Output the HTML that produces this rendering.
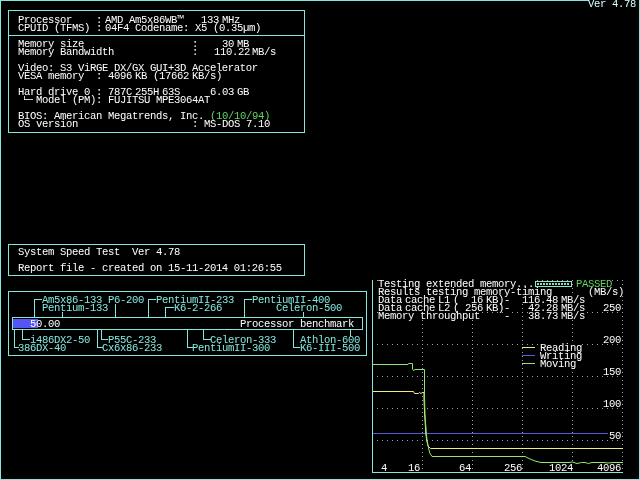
<!DOCTYPE html>
<html lang="en">
<head>
<meta charset="utf-8">
<title>System Speed Test 4.78</title>
<style>
html,body{margin:0;padding:0;background:#000;}
body{width:640px;height:480px;overflow:hidden;position:relative;}
svg{position:absolute;left:0;top:0;display:block;will-change:transform;}
text{font-family:"Liberation Mono","DejaVu Sans Mono",monospace;font-size:10.6px;letter-spacing:-0.3610px;white-space:pre;}
</style>
</head>
<body>
<svg width="640" height="480" viewBox="0 0 640 480">
<rect width="640" height="480" fill="#000"/>
<rect x="0" y="0" width="589" height="1" fill="#84e6dc"/>
<rect x="0" y="0" width="1" height="480" fill="#84e6dc"/>
<rect x="0" y="479" width="640" height="1" fill="#84e6dc"/>
<rect x="639" y="0" width="1" height="480" fill="#84e6dc"/>
<rect x="8" y="10" width="297" height="1" fill="#84e6dc"/>
<rect x="8" y="132" width="297" height="1" fill="#84e6dc"/>
<rect x="8" y="10" width="1" height="123" fill="#84e6dc"/>
<rect x="304" y="10" width="1" height="123" fill="#84e6dc"/>
<rect x="8" y="35" width="297" height="1" fill="#84e6dc"/>
<rect x="8" y="244" width="297" height="1" fill="#84e6dc"/>
<rect x="8" y="275" width="297" height="1" fill="#84e6dc"/>
<rect x="8" y="244" width="1" height="32" fill="#84e6dc"/>
<rect x="304" y="244" width="1" height="32" fill="#84e6dc"/>
<rect x="8" y="291" width="359" height="1" fill="#84e6dc"/>
<rect x="8" y="355" width="359" height="1" fill="#84e6dc"/>
<rect x="8" y="291" width="1" height="65" fill="#84e6dc"/>
<rect x="366" y="291" width="1" height="65" fill="#84e6dc"/>
<rect x="13" y="319" width="25" height="9" fill="#5555f5"/>
<rect x="12" y="317" width="351" height="1" fill="#84e6dc"/>
<rect x="12" y="329" width="351" height="1" fill="#84e6dc"/>
<rect x="12" y="317" width="1" height="13" fill="#84e6dc"/>
<rect x="362" y="317" width="1" height="13" fill="#84e6dc"/>
<rect x="34" y="299" width="1" height="18" fill="#84e6dc"/>
<rect x="34" y="299" width="8" height="1" fill="#84e6dc"/>
<rect x="62" y="312" width="1" height="5" fill="#84e6dc"/>
<rect x="115" y="304" width="1" height="13" fill="#84e6dc"/>
<rect x="148" y="299" width="1" height="18" fill="#84e6dc"/>
<rect x="148" y="299" width="8" height="1" fill="#84e6dc"/>
<rect x="165" y="307" width="1" height="10" fill="#84e6dc"/>
<rect x="165" y="307" width="9" height="1" fill="#84e6dc"/>
<rect x="244" y="299" width="1" height="18" fill="#84e6dc"/>
<rect x="244" y="299" width="8" height="1" fill="#84e6dc"/>
<rect x="303" y="312" width="1" height="5" fill="#84e6dc"/>
<rect x="14" y="330" width="1" height="18" fill="#84e6dc"/>
<rect x="14" y="347" width="5" height="1" fill="#84e6dc"/>
<rect x="22" y="330" width="1" height="10" fill="#84e6dc"/>
<rect x="22" y="339" width="8" height="1" fill="#84e6dc"/>
<rect x="97" y="330" width="1" height="18" fill="#84e6dc"/>
<rect x="97" y="347" width="6" height="1" fill="#84e6dc"/>
<rect x="101" y="330" width="1" height="10" fill="#84e6dc"/>
<rect x="101" y="339" width="7" height="1" fill="#84e6dc"/>
<rect x="187" y="330" width="1" height="18" fill="#84e6dc"/>
<rect x="187" y="347" width="6" height="1" fill="#84e6dc"/>
<rect x="203" y="330" width="1" height="10" fill="#84e6dc"/>
<rect x="203" y="339" width="8" height="1" fill="#84e6dc"/>
<rect x="293" y="330" width="1" height="18" fill="#84e6dc"/>
<rect x="293" y="347" width="7" height="1" fill="#84e6dc"/>
<rect x="350" y="330" width="1" height="6" fill="#84e6dc"/>
<path d="M377 280h1v1h-1zM382 280h1v1h-1zM387 280h1v1h-1zM392 280h1v1h-1zM397 280h1v1h-1zM402 280h1v1h-1zM407 280h1v1h-1zM412 280h1v1h-1zM417 280h1v1h-1zM422 280h1v1h-1zM427 280h1v1h-1zM432 280h1v1h-1zM437 280h1v1h-1zM442 280h1v1h-1zM447 280h1v1h-1zM452 280h1v1h-1zM457 280h1v1h-1zM462 280h1v1h-1zM467 280h1v1h-1zM472 280h1v1h-1zM477 280h1v1h-1zM482 280h1v1h-1zM487 280h1v1h-1zM492 280h1v1h-1zM497 280h1v1h-1zM502 280h1v1h-1zM507 280h1v1h-1zM512 280h1v1h-1zM517 280h1v1h-1zM522 280h1v1h-1zM527 280h1v1h-1zM532 280h1v1h-1zM537 280h1v1h-1zM542 280h1v1h-1zM547 280h1v1h-1zM552 280h1v1h-1zM557 280h1v1h-1zM562 280h1v1h-1zM567 280h1v1h-1zM572 280h1v1h-1zM577 280h1v1h-1zM582 280h1v1h-1zM587 280h1v1h-1zM592 280h1v1h-1zM597 280h1v1h-1zM602 280h1v1h-1zM607 280h1v1h-1zM612 280h1v1h-1zM617 280h1v1h-1zM622 280h1v1h-1zM377 312h1v1h-1zM382 312h1v1h-1zM387 312h1v1h-1zM392 312h1v1h-1zM397 312h1v1h-1zM402 312h1v1h-1zM407 312h1v1h-1zM412 312h1v1h-1zM417 312h1v1h-1zM422 312h1v1h-1zM427 312h1v1h-1zM432 312h1v1h-1zM437 312h1v1h-1zM442 312h1v1h-1zM447 312h1v1h-1zM452 312h1v1h-1zM457 312h1v1h-1zM462 312h1v1h-1zM467 312h1v1h-1zM472 312h1v1h-1zM477 312h1v1h-1zM482 312h1v1h-1zM487 312h1v1h-1zM492 312h1v1h-1zM497 312h1v1h-1zM502 312h1v1h-1zM507 312h1v1h-1zM512 312h1v1h-1zM517 312h1v1h-1zM522 312h1v1h-1zM527 312h1v1h-1zM532 312h1v1h-1zM537 312h1v1h-1zM542 312h1v1h-1zM547 312h1v1h-1zM552 312h1v1h-1zM557 312h1v1h-1zM562 312h1v1h-1zM567 312h1v1h-1zM572 312h1v1h-1zM577 312h1v1h-1zM582 312h1v1h-1zM587 312h1v1h-1zM592 312h1v1h-1zM597 312h1v1h-1zM602 312h1v1h-1zM607 312h1v1h-1zM612 312h1v1h-1zM617 312h1v1h-1zM622 312h1v1h-1zM377 344h1v1h-1zM382 344h1v1h-1zM387 344h1v1h-1zM392 344h1v1h-1zM397 344h1v1h-1zM402 344h1v1h-1zM407 344h1v1h-1zM412 344h1v1h-1zM417 344h1v1h-1zM422 344h1v1h-1zM427 344h1v1h-1zM432 344h1v1h-1zM437 344h1v1h-1zM442 344h1v1h-1zM447 344h1v1h-1zM452 344h1v1h-1zM457 344h1v1h-1zM462 344h1v1h-1zM467 344h1v1h-1zM472 344h1v1h-1zM477 344h1v1h-1zM482 344h1v1h-1zM487 344h1v1h-1zM492 344h1v1h-1zM497 344h1v1h-1zM502 344h1v1h-1zM507 344h1v1h-1zM512 344h1v1h-1zM517 344h1v1h-1zM522 344h1v1h-1zM527 344h1v1h-1zM532 344h1v1h-1zM537 344h1v1h-1zM542 344h1v1h-1zM547 344h1v1h-1zM552 344h1v1h-1zM557 344h1v1h-1zM562 344h1v1h-1zM567 344h1v1h-1zM572 344h1v1h-1zM577 344h1v1h-1zM582 344h1v1h-1zM587 344h1v1h-1zM592 344h1v1h-1zM597 344h1v1h-1zM602 344h1v1h-1zM607 344h1v1h-1zM612 344h1v1h-1zM617 344h1v1h-1zM622 344h1v1h-1zM377 376h1v1h-1zM382 376h1v1h-1zM387 376h1v1h-1zM392 376h1v1h-1zM397 376h1v1h-1zM402 376h1v1h-1zM407 376h1v1h-1zM412 376h1v1h-1zM417 376h1v1h-1zM422 376h1v1h-1zM427 376h1v1h-1zM432 376h1v1h-1zM437 376h1v1h-1zM442 376h1v1h-1zM447 376h1v1h-1zM452 376h1v1h-1zM457 376h1v1h-1zM462 376h1v1h-1zM467 376h1v1h-1zM472 376h1v1h-1zM477 376h1v1h-1zM482 376h1v1h-1zM487 376h1v1h-1zM492 376h1v1h-1zM497 376h1v1h-1zM502 376h1v1h-1zM507 376h1v1h-1zM512 376h1v1h-1zM517 376h1v1h-1zM522 376h1v1h-1zM527 376h1v1h-1zM532 376h1v1h-1zM537 376h1v1h-1zM542 376h1v1h-1zM547 376h1v1h-1zM552 376h1v1h-1zM557 376h1v1h-1zM562 376h1v1h-1zM567 376h1v1h-1zM572 376h1v1h-1zM577 376h1v1h-1zM582 376h1v1h-1zM587 376h1v1h-1zM592 376h1v1h-1zM597 376h1v1h-1zM602 376h1v1h-1zM607 376h1v1h-1zM612 376h1v1h-1zM617 376h1v1h-1zM622 376h1v1h-1zM377 408h1v1h-1zM382 408h1v1h-1zM387 408h1v1h-1zM392 408h1v1h-1zM397 408h1v1h-1zM402 408h1v1h-1zM407 408h1v1h-1zM412 408h1v1h-1zM417 408h1v1h-1zM422 408h1v1h-1zM427 408h1v1h-1zM432 408h1v1h-1zM437 408h1v1h-1zM442 408h1v1h-1zM447 408h1v1h-1zM452 408h1v1h-1zM457 408h1v1h-1zM462 408h1v1h-1zM467 408h1v1h-1zM472 408h1v1h-1zM477 408h1v1h-1zM482 408h1v1h-1zM487 408h1v1h-1zM492 408h1v1h-1zM497 408h1v1h-1zM502 408h1v1h-1zM507 408h1v1h-1zM512 408h1v1h-1zM517 408h1v1h-1zM522 408h1v1h-1zM527 408h1v1h-1zM532 408h1v1h-1zM537 408h1v1h-1zM542 408h1v1h-1zM547 408h1v1h-1zM552 408h1v1h-1zM557 408h1v1h-1zM562 408h1v1h-1zM567 408h1v1h-1zM572 408h1v1h-1zM577 408h1v1h-1zM582 408h1v1h-1zM587 408h1v1h-1zM592 408h1v1h-1zM597 408h1v1h-1zM602 408h1v1h-1zM607 408h1v1h-1zM612 408h1v1h-1zM617 408h1v1h-1zM622 408h1v1h-1zM377 440h1v1h-1zM382 440h1v1h-1zM387 440h1v1h-1zM392 440h1v1h-1zM397 440h1v1h-1zM402 440h1v1h-1zM407 440h1v1h-1zM412 440h1v1h-1zM417 440h1v1h-1zM422 440h1v1h-1zM427 440h1v1h-1zM432 440h1v1h-1zM437 440h1v1h-1zM442 440h1v1h-1zM447 440h1v1h-1zM452 440h1v1h-1zM457 440h1v1h-1zM462 440h1v1h-1zM467 440h1v1h-1zM472 440h1v1h-1zM477 440h1v1h-1zM482 440h1v1h-1zM487 440h1v1h-1zM492 440h1v1h-1zM497 440h1v1h-1zM502 440h1v1h-1zM507 440h1v1h-1zM512 440h1v1h-1zM517 440h1v1h-1zM522 440h1v1h-1zM527 440h1v1h-1zM532 440h1v1h-1zM537 440h1v1h-1zM542 440h1v1h-1zM547 440h1v1h-1zM552 440h1v1h-1zM557 440h1v1h-1zM562 440h1v1h-1zM567 440h1v1h-1zM572 440h1v1h-1zM577 440h1v1h-1zM582 440h1v1h-1zM587 440h1v1h-1zM592 440h1v1h-1zM597 440h1v1h-1zM602 440h1v1h-1zM607 440h1v1h-1zM612 440h1v1h-1zM617 440h1v1h-1zM622 440h1v1h-1zM422 280h1v1h-1zM422 284h1v1h-1zM422 288h1v1h-1zM422 292h1v1h-1zM422 296h1v1h-1zM422 300h1v1h-1zM422 304h1v1h-1zM422 308h1v1h-1zM422 312h1v1h-1zM422 316h1v1h-1zM422 320h1v1h-1zM422 324h1v1h-1zM422 328h1v1h-1zM422 332h1v1h-1zM422 336h1v1h-1zM422 340h1v1h-1zM422 344h1v1h-1zM422 348h1v1h-1zM422 352h1v1h-1zM422 356h1v1h-1zM422 360h1v1h-1zM422 364h1v1h-1zM422 368h1v1h-1zM422 372h1v1h-1zM422 376h1v1h-1zM422 380h1v1h-1zM422 384h1v1h-1zM422 388h1v1h-1zM422 392h1v1h-1zM422 396h1v1h-1zM422 400h1v1h-1zM422 404h1v1h-1zM422 408h1v1h-1zM422 412h1v1h-1zM422 416h1v1h-1zM422 420h1v1h-1zM422 424h1v1h-1zM422 428h1v1h-1zM422 432h1v1h-1zM422 436h1v1h-1zM422 440h1v1h-1zM422 444h1v1h-1zM422 448h1v1h-1zM422 452h1v1h-1zM422 456h1v1h-1zM422 460h1v1h-1zM422 464h1v1h-1zM422 468h1v1h-1zM472 280h1v1h-1zM472 284h1v1h-1zM472 288h1v1h-1zM472 292h1v1h-1zM472 296h1v1h-1zM472 300h1v1h-1zM472 304h1v1h-1zM472 308h1v1h-1zM472 312h1v1h-1zM472 316h1v1h-1zM472 320h1v1h-1zM472 324h1v1h-1zM472 328h1v1h-1zM472 332h1v1h-1zM472 336h1v1h-1zM472 340h1v1h-1zM472 344h1v1h-1zM472 348h1v1h-1zM472 352h1v1h-1zM472 356h1v1h-1zM472 360h1v1h-1zM472 364h1v1h-1zM472 368h1v1h-1zM472 372h1v1h-1zM472 376h1v1h-1zM472 380h1v1h-1zM472 384h1v1h-1zM472 388h1v1h-1zM472 392h1v1h-1zM472 396h1v1h-1zM472 400h1v1h-1zM472 404h1v1h-1zM472 408h1v1h-1zM472 412h1v1h-1zM472 416h1v1h-1zM472 420h1v1h-1zM472 424h1v1h-1zM472 428h1v1h-1zM472 432h1v1h-1zM472 436h1v1h-1zM472 440h1v1h-1zM472 444h1v1h-1zM472 448h1v1h-1zM472 452h1v1h-1zM472 456h1v1h-1zM472 460h1v1h-1zM472 464h1v1h-1zM472 468h1v1h-1zM522 280h1v1h-1zM522 284h1v1h-1zM522 288h1v1h-1zM522 292h1v1h-1zM522 296h1v1h-1zM522 300h1v1h-1zM522 304h1v1h-1zM522 308h1v1h-1zM522 312h1v1h-1zM522 316h1v1h-1zM522 320h1v1h-1zM522 324h1v1h-1zM522 328h1v1h-1zM522 332h1v1h-1zM522 336h1v1h-1zM522 340h1v1h-1zM522 344h1v1h-1zM522 348h1v1h-1zM522 352h1v1h-1zM522 356h1v1h-1zM522 360h1v1h-1zM522 364h1v1h-1zM522 368h1v1h-1zM522 372h1v1h-1zM522 376h1v1h-1zM522 380h1v1h-1zM522 384h1v1h-1zM522 388h1v1h-1zM522 392h1v1h-1zM522 396h1v1h-1zM522 400h1v1h-1zM522 404h1v1h-1zM522 408h1v1h-1zM522 412h1v1h-1zM522 416h1v1h-1zM522 420h1v1h-1zM522 424h1v1h-1zM522 428h1v1h-1zM522 432h1v1h-1zM522 436h1v1h-1zM522 440h1v1h-1zM522 444h1v1h-1zM522 448h1v1h-1zM522 452h1v1h-1zM522 456h1v1h-1zM522 460h1v1h-1zM522 464h1v1h-1zM522 468h1v1h-1zM572 280h1v1h-1zM572 284h1v1h-1zM572 288h1v1h-1zM572 292h1v1h-1zM572 296h1v1h-1zM572 300h1v1h-1zM572 304h1v1h-1zM572 308h1v1h-1zM572 312h1v1h-1zM572 316h1v1h-1zM572 320h1v1h-1zM572 324h1v1h-1zM572 328h1v1h-1zM572 332h1v1h-1zM572 336h1v1h-1zM572 340h1v1h-1zM572 344h1v1h-1zM572 348h1v1h-1zM572 352h1v1h-1zM572 356h1v1h-1zM572 360h1v1h-1zM572 364h1v1h-1zM572 368h1v1h-1zM572 372h1v1h-1zM572 376h1v1h-1zM572 380h1v1h-1zM572 384h1v1h-1zM572 388h1v1h-1zM572 392h1v1h-1zM572 396h1v1h-1zM572 400h1v1h-1zM572 404h1v1h-1zM572 408h1v1h-1zM572 412h1v1h-1zM572 416h1v1h-1zM572 420h1v1h-1zM572 424h1v1h-1zM572 428h1v1h-1zM572 432h1v1h-1zM572 436h1v1h-1zM572 440h1v1h-1zM572 444h1v1h-1zM572 448h1v1h-1zM572 452h1v1h-1zM572 456h1v1h-1zM572 460h1v1h-1zM572 464h1v1h-1zM572 468h1v1h-1zM622 280h1v1h-1zM622 284h1v1h-1zM622 288h1v1h-1zM622 292h1v1h-1zM622 296h1v1h-1zM622 300h1v1h-1zM622 304h1v1h-1zM622 308h1v1h-1zM622 312h1v1h-1zM622 316h1v1h-1zM622 320h1v1h-1zM622 324h1v1h-1zM622 328h1v1h-1zM622 332h1v1h-1zM622 336h1v1h-1zM622 340h1v1h-1zM622 344h1v1h-1zM622 348h1v1h-1zM622 352h1v1h-1zM622 356h1v1h-1zM622 360h1v1h-1zM622 364h1v1h-1zM622 368h1v1h-1zM622 372h1v1h-1zM622 376h1v1h-1zM622 380h1v1h-1zM622 384h1v1h-1zM622 388h1v1h-1zM622 392h1v1h-1zM622 396h1v1h-1zM622 400h1v1h-1zM622 404h1v1h-1zM622 408h1v1h-1zM622 412h1v1h-1zM622 416h1v1h-1zM622 420h1v1h-1zM622 424h1v1h-1zM622 428h1v1h-1zM622 432h1v1h-1zM622 436h1v1h-1zM622 440h1v1h-1zM622 444h1v1h-1zM622 448h1v1h-1zM622 452h1v1h-1zM622 456h1v1h-1zM622 460h1v1h-1zM622 464h1v1h-1zM622 468h1v1h-1z" fill="#94aca4"/>
<rect x="378" y="280" width="156" height="8" fill="#000"/>
<rect x="576" y="280" width="36" height="8" fill="#000"/>
<rect x="378" y="288" width="174" height="8" fill="#000"/>
<rect x="588" y="288" width="36" height="8" fill="#000"/>
<rect x="378" y="296" width="24" height="8" fill="#000"/>
<rect x="405" y="296" width="30" height="8" fill="#000"/>
<rect x="438" y="296" width="12" height="8" fill="#000"/>
<rect x="453" y="296" width="30" height="8" fill="#000"/>
<rect x="486" y="296" width="24" height="8" fill="#000"/>
<rect x="522" y="296" width="36" height="8" fill="#000"/>
<rect x="561" y="296" width="24" height="8" fill="#000"/>
<rect x="378" y="304" width="24" height="8" fill="#000"/>
<rect x="405" y="304" width="30" height="8" fill="#000"/>
<rect x="438" y="304" width="12" height="8" fill="#000"/>
<rect x="453" y="304" width="30" height="8" fill="#000"/>
<rect x="486" y="304" width="24" height="8" fill="#000"/>
<rect x="528" y="304" width="30" height="8" fill="#000"/>
<rect x="561" y="304" width="24" height="8" fill="#000"/>
<rect x="378" y="312" width="102" height="8" fill="#000"/>
<rect x="504" y="312" width="6" height="8" fill="#000"/>
<rect x="528" y="312" width="30" height="8" fill="#000"/>
<rect x="561" y="312" width="24" height="8" fill="#000"/>
<rect x="603" y="304" width="18" height="8" fill="#000"/>
<rect x="603" y="336" width="18" height="8" fill="#000"/>
<rect x="603" y="368" width="18" height="8" fill="#000"/>
<rect x="603" y="400" width="18" height="8" fill="#000"/>
<rect x="609" y="432" width="12" height="8" fill="#000"/>
<rect x="540" y="344" width="42" height="8" fill="#000"/>
<rect x="540" y="352" width="42" height="8" fill="#000"/>
<rect x="540" y="360" width="36" height="8" fill="#000"/>
<rect x="381" y="464" width="6" height="8" fill="#000"/>
<rect x="408" y="464" width="12" height="8" fill="#000"/>
<rect x="459" y="464" width="12" height="8" fill="#000"/>
<rect x="504" y="464" width="18" height="8" fill="#000"/>
<rect x="549" y="464" width="24" height="8" fill="#000"/>
<rect x="597" y="464" width="24" height="8" fill="#000"/>
<rect x="372" y="280" width="1" height="193" fill="#84e6dc"/>
<rect x="372" y="472" width="251" height="1" fill="#84e6dc"/>
<rect x="535" y="281" width="37" height="1" fill="#84e6dc"/>
<rect x="535" y="286" width="37" height="1" fill="#84e6dc"/>
<rect x="535" y="281" width="1" height="6" fill="#84e6dc"/>
<rect x="571" y="281" width="1" height="6" fill="#84e6dc"/>
<path d="M537 283h2v2h-2zM540 283h2v2h-2zM543 283h2v2h-2zM546 283h2v2h-2zM549 283h2v2h-2zM552 283h2v2h-2zM555 283h2v2h-2zM558 283h2v2h-2zM561 283h2v2h-2zM564 283h2v2h-2zM567 283h2v2h-2z" fill="#8fe0a4"/>
<path d="M373 433.5H608" stroke="#5a5ad8" stroke-width="1" fill="none"/>
<path d="M373 391.5H413.5L414.5 393.5H418.5L419.5 392.5L421 393.5L422.5 392.5H424V400L424.7 415L425.8 433L426.6 440L428 446L430.5 448.5H623" stroke="#ecec80" stroke-width="1" fill="none"/>
<path d="M373 364.5H408L408.5 363.5H412.5V369L413.5 370.5L415 369.5H424.5V395L425 415L426.3 433L427 440L428.5 448L429.8 453L432 456.5H525L530 459L535 461L541 462.5H569L572.5 462L577 463.5L581.5 462.5H585L588.5 463.5L592 462.5H604L608 463L613 462.5H623" stroke="#8ee878" stroke-width="1" fill="none"/>
<rect x="522" y="347" width="13" height="1" fill="#ecec80"/>
<rect x="522" y="355" width="13" height="1" fill="#5a5ad8"/>
<rect x="522" y="363" width="13" height="1" fill="#8ee878"/>
<g opacity="0.999">
<text x="18" y="23" fill="#ffffff">Processor    :</text>
<text x="105" y="23" fill="#ffffff">AMD Am5x86WB™   133</text>
<text x="222" y="23" fill="#ffffff">MHz</text>
<text x="18" y="31" fill="#ffffff">CPUID (TFMS) :</text>
<text x="105" y="31" fill="#ffffff">04F4 Codename: X5 (0.35µm)</text>
<text x="18" y="47" fill="#ffffff">Memory size                  :</text>
<text x="222" y="47" fill="#ffffff">30</text>
<text x="237" y="47" fill="#ffffff">MB</text>
<text x="18" y="55" fill="#ffffff">Memory Bandwidth             :</text>
<text x="214" y="55" fill="#ffffff">110.22</text>
<text x="252" y="55" fill="#ffffff">MB/s</text>
<text x="18" y="71" fill="#ffffff">Video: S3 ViRGE DX/GX GUI+3D Accelerator</text>
<text x="18" y="79" fill="#ffffff">VESA memory  :</text>
<text x="108" y="79" fill="#ffffff">4096</text>
<text x="135" y="79" fill="#ffffff">KB</text>
<text x="153" y="79" fill="#ffffff">(17662</text>
<text x="192" y="79" fill="#ffffff">KB/s)</text>
<text x="18" y="95" fill="#ffffff">Hard drive 0 :</text>
<text x="108" y="95" fill="#ffffff">787C</text>
<text x="135" y="95" fill="#ffffff">255H</text>
<text x="162" y="95" fill="#ffffff">63S</text>
<text x="210" y="95" fill="#ffffff">6.03</text>
<text x="237" y="95" fill="#ffffff">GB</text>
<text x="36" y="103" fill="#ffffff">Model (PM):</text>
<text x="108" y="103" fill="#ffffff">FUJITSU MPE3064AT</text>
<text x="18" y="119" fill="#ffffff">BIOS: American Megatrends, Inc.</text>
<text x="210" y="119" fill="#62d462">(10/10/94)</text>
<text x="18" y="127" fill="#ffffff">OS version                   :</text>
<text x="204" y="127" fill="#ffffff">MS-DOS 7.10</text>
<text x="588" y="7" fill="#d8ffff">Ver 4.78</text>
<text x="18" y="255" fill="#ffffff">System Speed Test  Ver 4.78</text>
<text x="18" y="271" fill="#ffffff">Report file - created on 15-11-2014 01:26:55</text>
<text x="42" y="303" fill="#84e8e0">Am5x86-133 P6-200</text>
<text x="156" y="303" fill="#84e8e0">PentiumII-233</text>
<text x="252" y="303" fill="#84e8e0">PentiumII-400</text>
<text x="42" y="311" fill="#84e8e0">Pentium-133</text>
<text x="174" y="311" fill="#84e8e0">K6-2-266</text>
<text x="276" y="311" fill="#84e8e0">Celeron-500</text>
<text x="30" y="327" fill="#ffffff">50.00</text>
<text x="240" y="327" fill="#ffffff">Processor benchmark</text>
<text x="30" y="343" fill="#84e8e0">i486DX2-50</text>
<text x="108" y="343" fill="#84e8e0">P55C-233</text>
<text x="210" y="343" fill="#84e8e0">Celeron-333</text>
<text x="300" y="343" fill="#84e8e0">Athlon-600</text>
<text x="18" y="351" fill="#84e8e0">386DX-40</text>
<text x="102" y="351" fill="#84e8e0">Cx6x86-233</text>
<text x="192" y="351" fill="#84e8e0">PentiumII-300</text>
<text x="300" y="351" fill="#84e8e0">K6-III-500</text>
<text x="378" y="287" fill="#ffffff">Testing extended memory...</text>
<text x="576" y="287" fill="#62d462">PASSED</text>
<text x="378" y="295" fill="#ffffff">Results testing memory-timing</text>
<text x="588" y="295" fill="#ffffff">(MB/s)</text>
<text x="378" y="303" fill="#ffffff">Data</text>
<text x="405" y="303" fill="#ffffff">cache</text>
<text x="438" y="303" fill="#ffffff">L1</text>
<text x="453" y="303" fill="#ffffff">(  16</text>
<text x="486" y="303" fill="#ffffff">KB)-</text>
<text x="522" y="303" fill="#ffffff">116.48</text>
<text x="561" y="303" fill="#ffffff">MB/s</text>
<text x="378" y="311" fill="#ffffff">Data</text>
<text x="405" y="311" fill="#ffffff">cache</text>
<text x="438" y="311" fill="#ffffff">L2</text>
<text x="453" y="311" fill="#ffffff">( 256</text>
<text x="486" y="311" fill="#ffffff">KB)-</text>
<text x="528" y="311" fill="#ffffff">42.28</text>
<text x="561" y="311" fill="#ffffff">MB/s</text>
<text x="378" y="319" fill="#ffffff">Memory throughput</text>
<text x="504" y="319" fill="#ffffff">-</text>
<text x="528" y="319" fill="#ffffff">38.73</text>
<text x="561" y="319" fill="#ffffff">MB/s</text>
<text x="603" y="311" fill="#ffffff">250</text>
<text x="603" y="343" fill="#ffffff">200</text>
<text x="603" y="375" fill="#ffffff">150</text>
<text x="603" y="407" fill="#ffffff">100</text>
<text x="609" y="439" fill="#ffffff">50</text>
<text x="540" y="351" fill="#ffffff">Reading</text>
<text x="540" y="359" fill="#ffffff">Writing</text>
<text x="540" y="367" fill="#ffffff">Moving</text>
<text x="381" y="471" fill="#ffffff">4</text>
<text x="408" y="471" fill="#ffffff">16</text>
<text x="459" y="471" fill="#ffffff">64</text>
<text x="504" y="471" fill="#ffffff">256</text>
<text x="549" y="471" fill="#ffffff">1024</text>
<text x="597" y="471" fill="#ffffff">4096</text>
<clipPath id="tee"><rect x="23" y="96" width="10" height="8"/></clipPath>
<text x="21" y="103" fill="#ffffff" clip-path="url(#tee)">└─</text>
</g>
</svg>
</body>
</html>
